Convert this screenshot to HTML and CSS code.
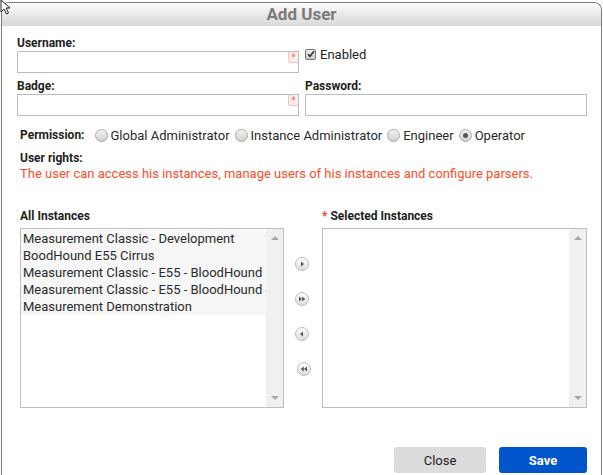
FILE: index.html
```html
<!DOCTYPE html>
<html>
<head>
<meta charset="utf-8">
<link rel="stylesheet" href="styles.css">
</head>
<body>
<svg class="cursor" width="12" height="16" viewBox="0 0 12 16"><path d="M1 0 L1 12 L4 9 L6.5 14 L8.5 13 L6 8 L10 8 Z" fill="#fff" stroke="#222" stroke-width="1"/></svg>
<div class="dialog">
  <div class="header">Add User</div>
  <div class="form">
    <div class="grid">
      <div class="field">
        <div class="label">Username:</div>
        <div class="input-wrap"><div class="input"></div><span class="req">*</span></div>
      </div>
      <div class="enabled">
        <span class="checkbox"><svg width="8" height="8" viewBox="0 0 8 8"><path d="M1 4.2 L3 6.3 L7 1.2" fill="none" stroke="#333" stroke-width="1.6"/></svg></span>
        <span class="enabled-text">Enabled</span>
      </div>
      <div class="field row2">
        <div class="label">Badge:</div>
        <div class="input-wrap"><div class="input"></div><span class="req">*</span></div>
      </div>
      <div class="field row2">
        <div class="label">Password:</div>
        <div class="input-wrap"><div class="input"></div></div>
      </div>
    </div>

    <div class="section">
      <div class="permission">
        <span class="label">Permission:</span>
        <span class="radio"></span><span class="opt">Global Administrator</span>
        <span class="radio"></span><span class="opt">Instance Administrator</span>
        <span class="radio"></span><span class="opt">Engineer</span>
        <span class="radio checked"></span><span class="opt">Operator</span>
      </div>
      <div class="label rights">User rights:</div>
      <div class="rights-text">The user can access his instances, manage users of his instances and configure parsers.</div>

      <div class="lists">
        <div class="col-left">
          <div class="label list-title">All Instances</div>
          <div class="listbox">
            <div class="items">
              <div class="item">Measurement Classic - Development</div>
              <div class="item">BoodHound E55 Cirrus</div>
              <div class="item">Measurement Classic - E55 - BloodHound</div>
              <div class="item">Measurement Classic - E55 - BloodHound - Test</div>
              <div class="item">Measurement Demonstration</div>
            </div>
            <div class="scrollbar">
              <span class="arrow up"></span>
              <span class="arrow down"></span>
            </div>
          </div>
        </div>
        <div class="middle">
          <span class="tbtn"><svg width="14" height="14" viewBox="0 0 14 14"><path d="M6 4.5 L9 7 L6 9.5 Z" fill="#555"/></svg></span>
          <span class="tbtn"><svg width="14" height="14" viewBox="0 0 14 14"><path d="M4 4.5 L7 7 L4 9.5 Z M7.2 4.5 L10.2 7 L7.2 9.5 Z" fill="#555"/></svg></span>
          <span class="tbtn"><svg width="14" height="14" viewBox="0 0 14 14"><path d="M8 4.5 L5 7 L8 9.5 Z" fill="#555"/></svg></span>
          <span class="tbtn shift"><svg width="14" height="14" viewBox="0 0 14 14"><path d="M6.8 4.5 L3.8 7 L6.8 9.5 Z M10 4.5 L7 7 L10 9.5 Z" fill="#555"/></svg></span>
        </div>
        <div class="col-right">
          <div class="label list-title"><span class="star">*</span> Selected Instances</div>
          <div class="listbox">
            <div class="items empty"></div>
            <div class="scrollbar">
              <span class="arrow up"></span>
              <span class="arrow down"></span>
            </div>
          </div>
        </div>
      </div>
    </div>

    <div class="actions">
      <button class="btn close">Close</button>
      <button class="btn save">Save</button>
    </div>
  </div>
</div>
</body>
</html>
```

FILE: styles.css
```css
html, body {
  margin: 0;
  padding: 0;
  background: #fff;
  font-family: Roboto, "Liberation Sans", Arial, sans-serif;
  color: #222;
  overflow: hidden;
}

.cursor {
  position: absolute;
  left: 0;
  top: 0;
  z-index: 5;
}

.dialog {
  margin: 2px 0 0 1px;
  width: 601px;
  height: 480px;
  box-sizing: border-box;
  border: 1px solid #7b7b7b;
  border-bottom: none;
  border-radius: 8px 8px 0 0;
  overflow: hidden;
  background: #fff;
}

.header {
  height: 23px;
  line-height: 23px;
  text-align: center;
  font-size: 17px;
  font-weight: bold;
  color: #7a7a7a;
  background: linear-gradient(#fbfbfb, #d8d8d8);
}

.form {
  padding: 10px 14px 0 15px;
}

.grid {
  display: grid;
  grid-template-columns: 282px 282px;
  column-gap: 6px;
}

.label {
  font-size: 12px;
  font-weight: bold;
  line-height: 15px;
  color: #1e1e1e;
}

.row2 {
  margin-top: 6px;
}

.input-wrap {
  position: relative;
}

.input {
  height: 20px;
  border: 1px solid #bdbdbd;
  background: #fff;
}

.req {
  position: absolute;
  top: 1px;
  right: 1px;
  width: 9px;
  height: 10px;
  background: #fdecec;
  border-left: 1px solid #f3c4c4;
  border-bottom: 1px solid #f3c4c4;
  border-bottom-left-radius: 3px;
  color: #f07070;
  font-size: 10px;
  line-height: 11px;
  text-align: center;
}

.enabled {
  display: flex;
  align-items: center;
  padding-top: 13px;
  height: 10px;
}

.checkbox {
  width: 9px;
  height: 9px;
  border: 1px solid #777;
  border-radius: 2px;
  background: linear-gradient(#eee, #c9c9c9);
  display: flex;
  align-items: center;
  justify-content: center;
}

.enabled-text {
  margin-left: 4px;
  font-size: 13px;
  color: #222;
}

.section {
  padding-left: 3px;
}

.permission {
  margin-top: 11px;
  display: flex;
  align-items: center;
  height: 16px;
}

.permission .label {
  margin-right: 10px;
}

.radio {
  width: 11px;
  height: 11px;
  border: 1px solid #a9a9a9;
  border-radius: 50%;
  background: linear-gradient(#f4f4f4, #cfcfcf);
  margin-right: 3px;
  display: flex;
  align-items: center;
  justify-content: center;
}

.radio.checked::after {
  content: "";
  width: 5px;
  height: 5px;
  border-radius: 50%;
  background: #555;
}

.opt {
  font-size: 13px;
  color: #2a2a2a;
  margin-right: 5px;
}

.rights {
  margin-top: 7px;
  line-height: 16px;
}

.rights-text {
  font-size: 13px;
  line-height: 16px;
  color: #ff4d1f;
}

.lists {
  display: flex;
  margin-top: 26px;
}

.list-title {
  line-height: 16px;
  margin-bottom: 4px;
}

.star {
  color: #ff3b1f;
}

.col-left {
  width: 264px;
}

.col-right {
  width: 265px;
}

.middle {
  width: 38px;
  box-sizing: border-box;
  padding-top: 49px;
  padding-left: 11px;
  display: flex;
  flex-direction: column;
  gap: 21px;
}

.tbtn {
  width: 14px;
  height: 14px;
  display: block;
  border-radius: 50%;
  box-sizing: border-box;
  border: 1px solid #bdbdbd;
  background: linear-gradient(#ffffff, #dcdcdc);
  overflow: hidden;
}

.tbtn svg {
  display: block;
  margin: -1px;
}

.tbtn.shift {
  margin-left: 2px;
}

.listbox {
  height: 180px;
  box-sizing: border-box;
  border: 1px solid #bfbfbf;
  display: flex;
  background: #fff;
}

.items {
  flex: 1;
  overflow: hidden;
  padding-top: 1px;
}

.item {
  background: #f6f6f6;
  font-size: 13px;
  line-height: 17px;
  padding-left: 2px;
  white-space: nowrap;
  color: #2b2b2b;
}

.scrollbar {
  width: 17px;
  background: #f0f0f0;
  display: flex;
  flex-direction: column;
  justify-content: space-between;
  align-items: center;
  padding: 7px 0 7px;
  box-sizing: border-box;
}

.arrow {
  width: 0;
  height: 0;
  border-left: 4px solid transparent;
  border-right: 4px solid transparent;
}

.arrow.up {
  border-bottom: 4px solid #a6a6a6;
}

.arrow.down {
  border-top: 4px solid #a6a6a6;
}

.actions {
  display: flex;
  justify-content: flex-end;
  gap: 13px;
  margin-top: 39px;
}

.btn {
  height: 26px;
  border: none;
  border-radius: 3px;
  font-family: Roboto, "Liberation Sans", Arial, sans-serif;
  font-size: 13px;
  padding: 0;
}

.close {
  width: 92px;
  background: #dcdcdc;
  color: #222;
}

.save {
  width: 88px;
  background: #0055cc;
  color: #fff;
  font-weight: bold;
}
```
